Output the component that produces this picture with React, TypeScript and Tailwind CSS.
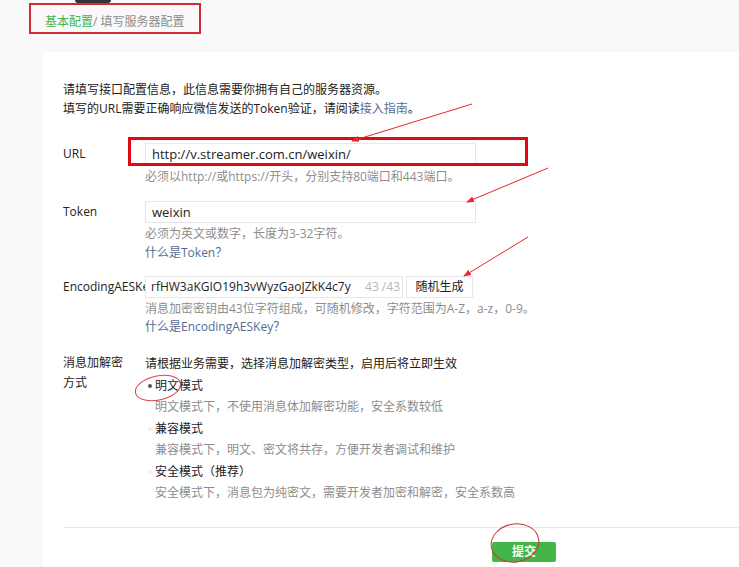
import React from 'react';

const FONT = { fontFamily: '"Open Sans", "Noto Sans CJK SC", sans-serif' };

const OPTIONS = [
  { title: '明文模式', desc: '明文模式下，不使用消息体加解密功能，安全系数较低', checked: true },
  { title: '兼容模式', desc: '兼容模式下，明文、密文将共存，方便开发者调试和维护', checked: false },
  { title: '安全模式（推荐）', desc: '安全模式下，消息包为纯密文，需要开发者加密和解密，安全系数高', checked: false },
];

function Annotations() {
  // red marks drawn over the screenshot
  return (
    <svg className="pointer-events-none absolute left-0 top-0" width="739" height="567">
      <defs>
        <marker id="head" markerWidth="8" markerHeight="6" refX="7" refY="3" orient="auto">
          <path d="M0,0 L8,3 L0,6 Z" fill="#e8262b" />
        </marker>
      </defs>
      <rect x="129.5" y="138.5" width="397" height="26" fill="none" stroke="#e00b12" strokeWidth="3" />
      <line x1="472" y1="104" x2="352" y2="141" stroke="#e8262b" strokeWidth="1" markerEnd="url(#head)" />
      <line x1="548" y1="168" x2="467" y2="202" stroke="#e8262b" strokeWidth="1" markerEnd="url(#head)" />
      <line x1="528" y1="237" x2="464" y2="276" stroke="#e8262b" strokeWidth="1" markerEnd="url(#head)" />
      <ellipse cx="158" cy="388" rx="23" ry="12" fill="none" stroke="#d9444a" strokeWidth="1" transform="rotate(-12 158 388)" />
      <ellipse cx="515" cy="543" rx="24" ry="19" fill="none" stroke="#c9373c" strokeWidth="1" transform="rotate(-10 515 543)" />
    </svg>
  );
}

function Row({ label, children }: { label: React.ReactNode; children: React.ReactNode }) {
  return (
    <div className="flex">
      <div className="w-[82px] shrink-0 overflow-hidden whitespace-nowrap text-[12px] leading-[22px] text-[#222]">
        {label}
      </div>
      <div className="flex-1">{children}</div>
    </div>
  );
}

export default function App() {
  return (
    <div className="relative h-[567px] w-[739px] overflow-hidden bg-[#f9f9f9]" style={FONT}>
      {/* header strip */}
      <div className="h-[52px]">
        <div className="ml-[75px] h-[3px] w-[36px] rounded-b bg-[#333]" />
        <div className="ml-[29px] w-[172px] border-2 border-[#d12a32] px-[14px] pt-[9px] pb-[2px] text-[12px] leading-[16px] text-[#8d8d8d]">
          <span className="text-[#44b549]">基本配置</span>/ 填写服务器配置
        </div>
      </div>

      {/* panel */}
      <div className="ml-[43px] h-[515px] bg-white pl-[20px] pt-[28px]">
        <div className="text-[12px] leading-[19px] text-[#222]">
          <p>请填写接口配置信息，此信息需要你拥有自己的服务器资源。</p>
          <p>
            填写的URL需要正确响应微信发送的Token验证，请阅读<span className="text-[#576b95]">接入指南</span>。
          </p>
        </div>

        <div className="mt-[25px]">
          <Row label="URL">
            <div className="h-[22px] w-[331px] border border-[#e7e7e7] px-[6px] text-[13px] leading-[20px] text-[#222]">
              http://v.streamer.com.cn/weixin/
            </div>
            <p className="mt-[2px] text-[12px] leading-[19px] text-[#8d8d8d]">
              必须以http://或https://开头，分别支持80端口和443端口。
            </p>
          </Row>
        </div>

        <div className="mt-[15px]">
          <Row label="Token">
            <div className="h-[22px] w-[331px] border border-[#e7e7e7] px-[6px] text-[13px] leading-[20px] text-[#222]">
              weixin
            </div>
            <p className="mt-[1px] text-[12px] leading-[19px] text-[#8d8d8d]">必须为英文或数字，长度为3-32字符。</p>
            <p className="text-[12px] leading-[19px] text-[#576b95]">什么是Token？</p>
          </Row>
        </div>

        <div className="mt-[14px]">
          <Row label="EncodingAESKey">
            <div className="flex items-center gap-[3px]">
              <div className="flex h-[22px] w-[258px] items-center justify-between border border-[#e7e7e7] pl-[5px] pr-[2px] text-[12px] text-[#222]">
                <span className="whitespace-nowrap">rfHW3aKGIO19h3vWyzGaoJZkK4c7y</span>
                <span className="whitespace-nowrap text-[#b5b5b5]">43 /43</span>
              </div>
              <button className="h-[22px] w-[67px] border border-[#e7e7e7] bg-white text-[12px] text-[#222]">
                随机生成
              </button>
            </div>
            <p className="mt-[2px] text-[12px] leading-[18px] text-[#8d8d8d]">
              消息加密密钥由43位字符组成，可随机修改，字符范围为A-Z，a-z，0-9。
            </p>
            <p className="text-[12px] leading-[18px] text-[#576b95]">什么是EncodingAESKey？</p>
          </Row>
        </div>

        <div className="mt-[17px] flex">
          <div className="w-[82px] shrink-0 text-[12px] leading-[20px] text-[#222]">
            <p>消息加解密</p>
            <p>方式</p>
          </div>
          <div className="text-[12px] leading-[21px]">
            <p className="text-[#222]">请根据业务需要，选择消息加解密类型，启用后将立即生效</p>
            {OPTIONS.map((o) => (
              <div key={o.title}>
                <div className="mt-[1px] flex items-center text-[#222]">
                  <span className="flex w-[10px] items-center justify-center">
                    {o.checked ? (
                      <span className="h-[4px] w-[4px] rounded-full bg-[#555]" />
                    ) : (
                      <span className="h-[4px] w-[4px] rounded-full bg-[#f0f0f0]" />
                    )}
                  </span>
                  <span>{o.title}</span>
                </div>
                <p className="pl-[10px] text-[#8d8d8d]">{o.desc}</p>
              </div>
            ))}
          </div>
        </div>

        <div className="mt-[24px] border-t border-[#e7e7e7]" />
        <div className="mt-[10px] pl-[429px]">
          <button className="h-[20px] w-[64px] rounded-[2px] bg-[#44b549] text-[12px] font-bold leading-[20px] text-white">
            提交
          </button>
        </div>
      </div>

      <Annotations />
    </div>
  );
}
